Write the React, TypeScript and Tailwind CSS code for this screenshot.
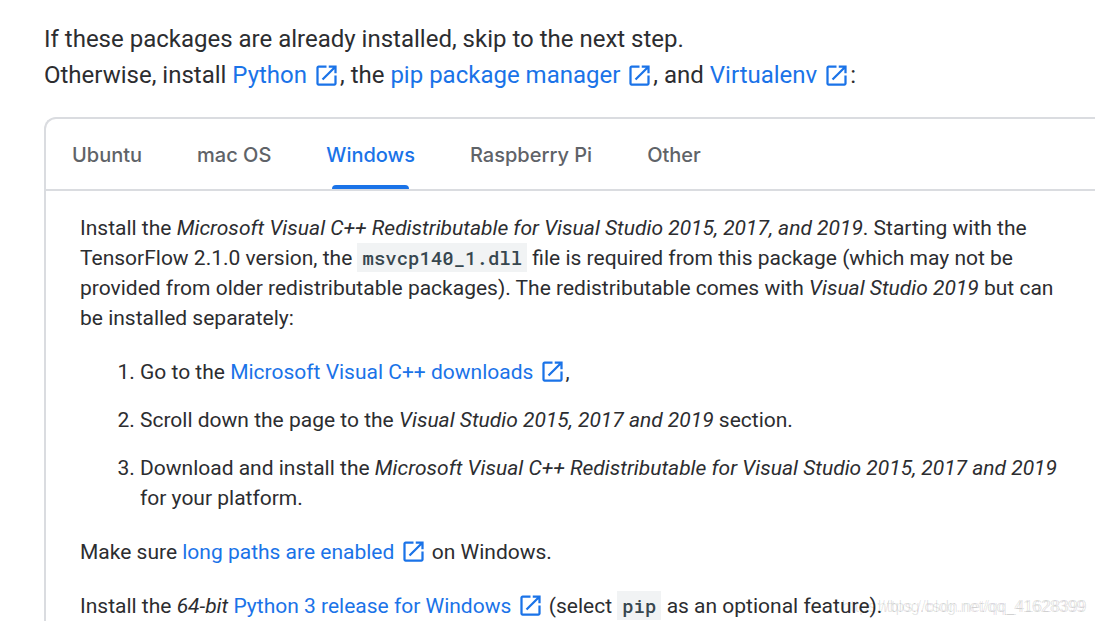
import React, { useState } from 'react';

const tabs = ['Ubuntu', 'mac OS', 'Windows', 'Raspberry Pi', 'Other'];

function ExternalLink({ children }: { children: React.ReactNode }) {
  return (
    <a href="#" className="text-[#1a73e8]">
      {children}{' '}
      <svg viewBox="0 0 24 24" className="inline-block size-[27px] align-[-6px]" fill="currentColor" aria-hidden="true">
        <path d="M19 19H5V5h7V3H5c-1.11 0-2 .9-2 2v14c0 1.1.89 2 2 2h14c1.1 0 2-.9 2-2v-7h-2v7zM14 3v2h3.59l-9.83 9.83 1.41 1.41L19 6.41V10h2V3h-7z" />
      </svg>
    </a>
  );
}

function Code({ children }: { children: React.ReactNode }) {
  return (
    <code className="bg-[#f1f3f4] px-[5px] py-[2px] font-['Roboto_Mono','DejaVu_Sans_Mono',monospace] text-[19px] font-medium leading-5 text-[#37474f]">
      {children}
    </code>
  );
}

export default function App() {
  const [activeTab, setActiveTab] = useState('Windows');

  return (
    <div className="relative h-screen overflow-hidden bg-white font-[Roboto,sans-serif] text-[#2c2d30]">
      <main className="pl-11 pt-[21px]">
        <p className="text-2xl leading-9">
          If these packages are already installed, skip to the next step.
          <br />
          Otherwise, install <ExternalLink>Python</ExternalLink>, the <ExternalLink>pip package manager</ExternalLink>, and{' '}
          <ExternalLink>Virtualenv</ExternalLink>:
        </p>

        <section className="mt-6 rounded-tl-xl border-l-2 border-t-2 border-[#dadce0]">
          <div role="tablist" className="flex gap-[3px] border-b-2 border-[#dadce0]">
            {tabs.map((tab) => (
              <button
                key={tab}
                role="tab"
                aria-selected={activeTab === tab}
                onClick={() => setActiveTab(tab)}
                className={`relative h-[70px] px-[26px] pt-[2px] font-[Inter,sans-serif] text-xl font-medium ${
                  activeTab === tab ? 'text-[#1a73e8]' : 'text-[#5f6368]'
                }`}
              >
                {tab}
                {activeTab === tab && (
                  <span className="absolute inset-x-8 bottom-0 h-1 rounded-t bg-[#1a73e8]" />
                )}
              </button>
            ))}
          </div>

          <div className="space-y-6 pl-[34px] pr-6 pt-[22px] text-[21px] leading-[30px]">
            <p>
              Install the <em>Microsoft Visual C++ Redistributable for Visual Studio 2015, 2017, and 2019</em>. Starting with the
              TensorFlow 2.1.0 version, the <Code>msvcp140_1.dll</Code> file is required from this package (which may not be
              provided from older redistributable packages). The redistributable comes with <em>Visual Studio 2019</em> but can be
              installed separately:
            </p>
            <ol className="list-decimal space-y-[18px] pl-[60px]">
              <li>
                Go to the <ExternalLink>Microsoft Visual C++ downloads</ExternalLink>,
              </li>
              <li>
                Scroll down the page to the <em>Visual Studio 2015, 2017 and 2019</em> section.
              </li>
              <li>
                Download and install the <em>Microsoft Visual C++ Redistributable for Visual Studio 2015, 2017 and 2019</em> for
                your platform.
              </li>
            </ol>
            <p>
              Make sure <ExternalLink>long paths are enabled</ExternalLink> on Windows.
            </p>
            <p>
              Install the <em>64-bit</em> <ExternalLink>Python 3 release for Windows</ExternalLink> (select <Code>pip</Code> as an
              optional feature).
            </p>
          </div>
        </section>
      </main>

      {/* doubled watermark */}
      <div className="pointer-events-none absolute bottom-2 right-2 font-['Liberation_Sans',sans-serif] text-base leading-5 text-black/10">
        <span className="absolute right-0.5">https://blog.net/qq_41628399</span>
        <span>https://blog.csdn.net/qq_41628399</span>
      </div>
    </div>
  );
}
